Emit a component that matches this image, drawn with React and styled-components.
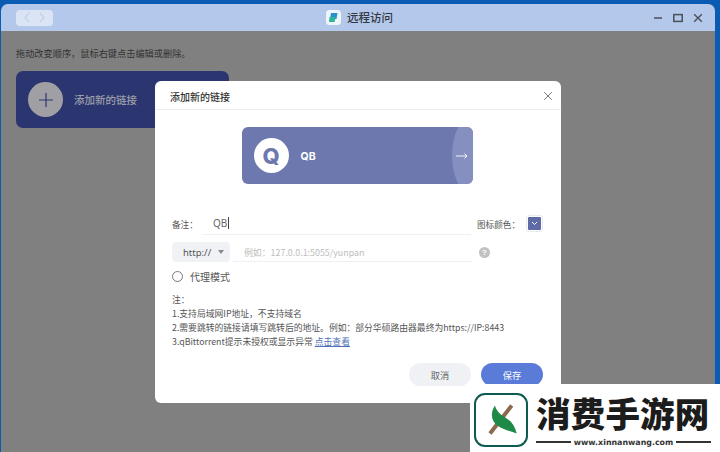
import React from "react";
import styled, { createGlobalStyle } from "styled-components";

const Global = createGlobalStyle`
  html, body { margin: 0; padding: 0; }
  body { font-family: "Noto Sans CJK SC", "Noto Sans", sans-serif; }
  * { box-sizing: border-box; }
`;
const Desktop = styled.div`
  position: relative; width: 720px; height: 452px; overflow: hidden;
  background: #0a5cb3; padding: 4px 5px 0 1px;
`;
const Win = styled.div`
  display: flex; flex-direction: column; height: 448px;
  background: #808080; border-radius: 7px 7px 0 0; overflow: hidden;
`;
const TitleBar = styled.header`
  position: relative; flex: 0 0 27px; display: flex; align-items: center; justify-content: space-between;
  background: #b3c8ea; padding: 0 11px 0 15px;
`;
const NavPill = styled.div`
  width: 37px; height: 16px; border-radius: 4px; background: #dae4f5;
  display: flex; align-items: center; justify-content: space-around; padding: 0 4px;
`;
const TitleGroup = styled.div`
  position: absolute; left: 325px; top: 5px; display: flex; align-items: center; gap: 6px;
  font-size: 11.5px; font-weight: 500; color: #33373f; line-height: 16px;
`;
const Controls = styled.div`display: flex; align-items: center; gap: 8px;`;
const Content = styled.main`flex: 1; padding: 15px 15px;`;
const Hint = styled.p`margin: 0 0 11px; font-size: 9.2px; line-height: 14px; color: #333; white-space: nowrap;`;
const AddCard = styled.div`
  width: 213px; height: 57px; border-radius: 7px; background: #2b3670;
  display: flex; align-items: center; padding-left: 12px; gap: 11px;
`;
const AddCircle = styled.div`
  width: 35px; height: 35px; border-radius: 50%; background: #a0a0a4;
  display: flex; align-items: center; justify-content: center;
`;
const AddLabel = styled.span`font-size: 10.5px; font-weight: 500; color: #9d9fa8;`;

const Dialog = styled.section`
  position: absolute; left: 155px; top: 81px; width: 406px; height: 322px;
  background: #fff; border-radius: 6px; display: flex; flex-direction: column;
`;
const DialogHead = styled.div`
  flex: 0 0 29px; border-bottom: 1px solid #ebedf0; display: flex; align-items: center;
  justify-content: space-between; padding: 2px 8px 0 15px;
  font-size: 10px; font-weight: 500; color: #333;
`;
const Preview = styled.div`
  position: relative; overflow: hidden; align-self: center; margin: 17px 0 0 -2px;
  width: 231px; height: 57px; border-radius: 6px; background: #6c78ae;
  display: flex; align-items: center; padding-left: 12px; gap: 12px;
`;
const QCircle = styled.div`
  width: 35px; height: 35px; border-radius: 50%; background: #fff;
  display: flex; align-items: center; justify-content: center;
  font: 800 22px/1 "Inter", "Liberation Sans", sans-serif; color: #6c78ae;
`;
const PreviewName = styled.span`font: 700 10.5px "Inter", "Liberation Sans", sans-serif; color: #fff; padding-top: 1px;`;
const Bulge = styled.div`
  position: absolute; right: -28px; top: -14px; width: 49px; height: 85px; border-radius: 50%;
  background: #8690c0; color: #fff;
  display: flex; align-items: center; padding-left: 4px;
`;
const Form = styled.div`display: flex; flex-direction: column; padding: 0 17px;`;
const RowOne = styled.div`
  display: flex; align-items: center; height: 23px; margin-top: 28px; font-size: 8.6px; color: #555;
`;
const FieldLabel = styled.span`flex: 0 0 30px;`;
const TextField = styled.div`
  flex: 0 0 269px; height: 23px; border-bottom: 1px solid #eef0f3; padding-left: 11px;
  display: flex; align-items: center; color: #666;
  font: 400 10px "Noto Sans", sans-serif;
`;
const Caret = styled.span`width: 1px; height: 12px; background: #444; margin-left: 1px;`;
const ColorLabel = styled.span`margin-left: 6px; flex: 0 0 51px; white-space: nowrap;`;
const Swatch = styled.div`
  width: 13px; height: 13px; background: #5f6ba6; border-radius: 1px; outline: 1px solid #e8eaf0; outline-offset: 1px;
  display: flex; align-items: center; justify-content: center;
`;
const RowTwo = styled.div`display: flex; align-items: center; height: 20px; margin-top: 7px;`;
const Select = styled.div`
  flex: 0 0 58px; height: 20px; border-radius: 4px; background: #f0f2f5; padding: 0 6px 0 11px;
  display: flex; align-items: center; justify-content: space-between;
  font: 400 9.5px "Noto Sans", sans-serif; color: #555;
`;
const UrlField = styled.div`
  flex: 0 0 240px; margin-left: 3px; height: 20px; border-bottom: 1px solid #eef0f3; padding: 1px 0 0 11px;
  display: flex; align-items: center; font-size: 8.9px; color: #bdbdbd; white-space: nowrap;
`;
const Help = styled.div`
  width: 11px; height: 11px; margin-left: 6px; border-radius: 50%; background: #c2c2c2; color: #fff;
  display: flex; align-items: center; justify-content: center; font: 700 8px "Liberation Sans", sans-serif;
`;
const RadioRow = styled.label`
  display: flex; align-items: center; gap: 7px; height: 15px; margin-top: 7px; font-size: 10px; color: #555;
`;
const Radio = styled.span`width: 11px; height: 11px; border-radius: 50%; border: 1px solid #777; background: #fff;`;
const Notes = styled.div`margin-top: 9px; font-size: 8.8px; line-height: 14px; color: #555; white-space: nowrap;`;
const Link = styled.span`color: #4f72b8; text-decoration: underline;`;
const Actions = styled.div`display: flex; justify-content: flex-end; gap: 10px; padding-right: 18px; margin-top: 14px;`;
const Btn = styled.button`
  width: 62px; height: 23px; border: 0; border-radius: 12px; font: 400 9.2px "Noto Sans CJK SC", sans-serif;
  background: ${p => (p.$primary ? "#5b7bd8" : "#eff1f4")};
  color: ${p => (p.$primary ? "#fff" : "#666")};
`;
const Mark = styled.aside`
  position: absolute; left: 470px; top: 384px; width: 250px; height: 68px; background: #fff;
  display: flex; align-items: flex-start; padding: 9px 0 0 4px; gap: 8px;
`;
const LogoBox = styled.div`
  width: 54px; height: 54px; border: 2px solid #0f5a50; border-radius: 11px;
  display: flex; align-items: center; justify-content: center;
`;
const MarkText = styled.div`display: flex; flex-direction: column; width: 175px;`;
const MarkName = styled.div`
  font-size: 34.5px; font-weight: 900; line-height: 38px; height: 38px; color: #1c1c1c; white-space: nowrap; letter-spacing: 0.2px;
`;
const UrlLine = styled.div`
  display: flex; align-items: center; gap: 3px; margin-top: 6px; height: 10px;
  font: 700 7.9px "DejaVu Sans", sans-serif; color: #333; white-space: nowrap;
  &::before, &::after { content: ""; flex: 1; height: 1.5px; background: #333; }
`;

const COMMA = "\uFF0C";
const COLON = "\uFF1A";

export default function App() {
  return (
    <Desktop>
      <Global />
      <Win>
        <TitleBar>
          <NavPill>
            <svg width="8" height="11" viewBox="0 0 8 11" fill="none" stroke="#c3cfe3" strokeWidth="1.2"><path d="M6 1 2 5.5 6 10" /></svg>
            <svg width="8" height="11" viewBox="0 0 8 11" fill="none" stroke="#c3cfe3" strokeWidth="1.2"><path d="M2 1 6 5.5 2 10" /></svg>
          </NavPill>
          <TitleGroup>
            <svg width="15" height="15" viewBox="0 0 15 15">
              <rect width="15" height="15" rx="3.5" fill="#eef5fb" />
              <path d="M5 3h6.5l-1 6H4z" fill="#2a8fc9" />
              <path d="M3.5 7h6l-.8 5H3z" fill="#2fb59a" />
            </svg>
            远程访问
          </TitleGroup>
          <Controls>
            <svg width="12" height="12" viewBox="0 0 12 12"><path d="M2 6h8" stroke="#4a4f58" strokeWidth="1.6" /></svg>
            <svg width="12" height="12" viewBox="0 0 12 12" fill="none"><rect x="1.8" y="2.6" width="8.4" height="6.8" stroke="#4a4f58" strokeWidth="1.5" /></svg>
            <svg width="12" height="12" viewBox="0 0 12 12"><path d="m2.2 2.2 7.6 7.6M9.8 2.2l-7.6 7.6" stroke="#4a4f58" strokeWidth="1.4" /></svg>
          </Controls>
        </TitleBar>
        <Content>
          <Hint>{`拖动改变顺序${COMMA}鼠标右键点击编辑或删除。`}</Hint>
          <AddCard>
            <AddCircle>
              <svg width="16" height="16" viewBox="0 0 16 16"><path d="M8 1v14M1 8h14" stroke="#2b3670" strokeWidth="1.2" /></svg>
            </AddCircle>
            <AddLabel>添加新的链接</AddLabel>
          </AddCard>
        </Content>
      </Win>
      <Dialog>
        <DialogHead>
          添加新的链接
          <svg width="10" height="10" viewBox="0 0 10 10"><path d="m1.2 1.2 7.6 7.6M8.8 1.2 1.2 8.8" stroke="#777" strokeWidth="1" /></svg>
        </DialogHead>
        <Preview>
          <QCircle>Q</QCircle>
          <PreviewName>QB</PreviewName>
          <Bulge>
            <svg width="12" height="8" viewBox="0 0 12 8" fill="none" stroke="#fff" strokeWidth="0.9"><path d="M0 4h11M8.5 1.5 11 4 8.5 6.5" /></svg>
          </Bulge>
        </Preview>
        <Form>
          <RowOne>
            <FieldLabel>{`备注${COLON}`}</FieldLabel>
            <TextField>QB<Caret /></TextField>
            <ColorLabel>{`图标颜色${COLON}`}</ColorLabel>
            <Swatch>
              <svg width="7" height="5" viewBox="0 0 7 5" fill="none" stroke="#fff" strokeWidth="1"><path d="m1 1 2.5 2.5L6 1" /></svg>
            </Swatch>
          </RowOne>
          <RowTwo>
            <Select>
              http://
              <svg width="6" height="4" viewBox="0 0 6 4"><path d="M0 0h6L3 4z" fill="#888" /></svg>
            </Select>
            <UrlField>{`例如${COLON}127.0.0.1:5055/yunpan`}</UrlField>
            <Help>?</Help>
          </RowTwo>
          <RadioRow><Radio />代理模式</RadioRow>
          <Notes>
            {`注${COLON}`}<br />
            {`1.支持局域网IP地址${COMMA}不支持域名`}<br />
            {`2.需要跳转的链接请填写跳转后的地址。例如${COLON}部分华硕路由器最终为https://IP:8443`}<br />
            3.qBittorrent提示未授权或显示异常 <Link>点击查看</Link>
          </Notes>
        </Form>
        <Actions>
          <Btn>取消</Btn>
          <Btn $primary>保存</Btn>
        </Actions>
      </Dialog>
      <Mark>
        <LogoBox>
          <svg width="34" height="42" viewBox="0 0 34 42">
            <path d="M27.7 6.5 6 34.5" stroke="#8a6a4e" strokeWidth="4" />
            <path d="M11 6.5C6 14 7 22 14 27c6 4 13 5 18.7 7.5C31 27 27 22 22 19 17 16 12 12 11 6.5z" fill="#1f8a47" />
          </svg>
        </LogoBox>
        <MarkText>
          <MarkName>消费手游网</MarkName>
          <UrlLine>www.xinnanwang.com</UrlLine>
        </MarkText>
      </Mark>
    </Desktop>
  );
}
